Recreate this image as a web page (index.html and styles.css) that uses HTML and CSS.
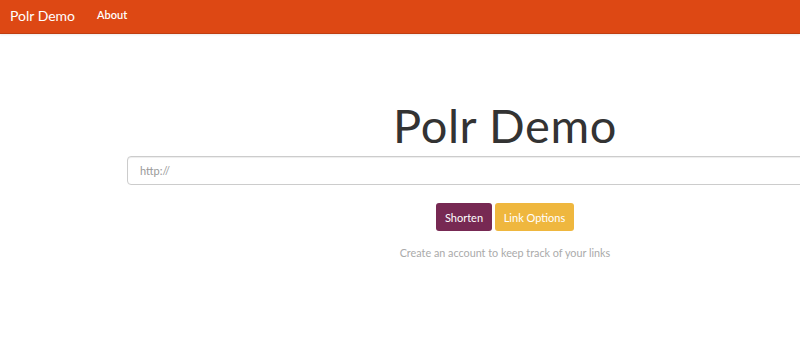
FILE: index.html
```html
<!DOCTYPE html>
<html>
<head>
<meta charset="utf-8">
<link rel="stylesheet" href="styles.css">
</head>
<body>
<nav class="navbar">
  <a class="brand">Polr Demo</a>
  <a class="nav-link">About</a>
</nav>
<main class="content">
  <h1 class="title">Polr Demo</h1>
  <input class="url-input" type="text" placeholder="http://">
  <div class="actions">
    <button class="btn btn-shorten">Shorten</button>
    <button class="btn btn-options">Link Options</button>
  </div>
  <p class="hint">Create an account to keep track of your links</p>
</main>
</body>
</html>
```
FILE: styles.css
```css
html, body {
  margin: 0;
  padding: 0;
  overflow: hidden;
  background: #fff;
  font-family: "Lato", "Open Sans", sans-serif;
}
.navbar {
  height: 33px;
  background: #dd4814;
  border-bottom: 1px solid #bf3e11;
  display: flex;
  align-items: center;
  padding-left: 10px;
  box-shadow: 0 1px 2px rgba(0,0,0,0.08);
}
.brand {
  color: #fff;
  font-size: 14px;
  margin-right: 22px;
  margin-top: -2px;
}
.nav-link {
  color: #fff;
  font-size: 11px;
  font-weight: 600;
  margin-top: -4px;
}
.content {
  width: 1010px;
  display: flex;
  flex-direction: column;
  align-items: center;
}
.title {
  font-size: 47px;
  font-weight: 400;
  color: #333;
  margin: 63px 0 0 0;
  line-height: 56px;
  letter-spacing: 0.6px;
}
.url-input {
  box-sizing: border-box;
  width: 756px;
  height: 29px;
  margin-top: 3px;
  border: 1px solid #ccc;
  border-radius: 4px;
  padding: 0 12px;
  font-family: inherit;
  font-size: 11px;
  color: #555;
  box-shadow: inset 0 1px 1px rgba(0,0,0,0.075);
}
.url-input::placeholder { color: #999; }
.actions {
  display: flex;
  gap: 3px;
  margin-top: 18px;
}
.btn {
  border: 0;
  border-radius: 3px;
  height: 28px;
  padding: 0;
  font-family: inherit;
  font-size: 11px;
  color: #fff;
}
.btn-shorten { background: #772953; width: 56px; }
.btn-options { background: #efb73e; width: 79px; }
.hint {
  margin: 15px 0 0 0;
  font-size: 10.8px;
  color: #aaa;
}
```
